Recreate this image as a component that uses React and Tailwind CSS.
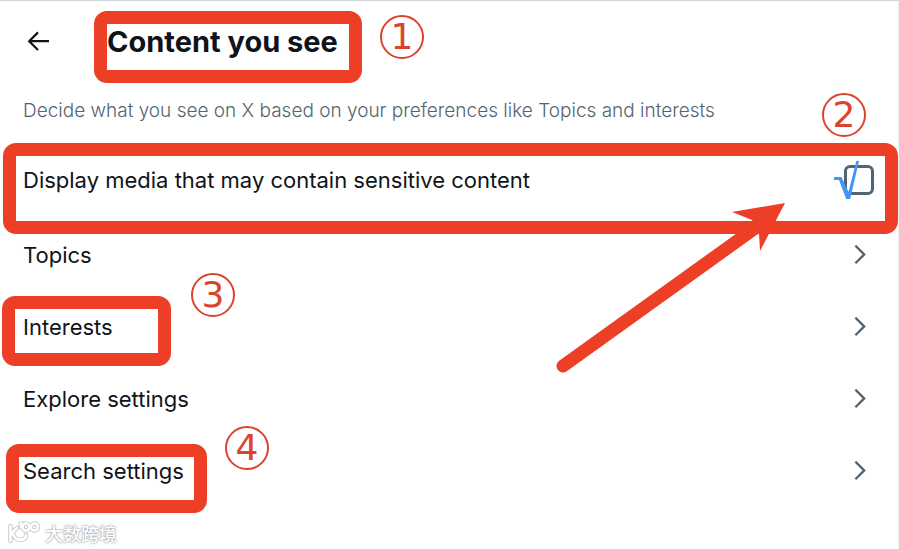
import React from "react";

const links = [
  { label: "Topics" },
  { label: "Interests", step: 3, box: "-left-[21px] -top-[15px] h-[70px] w-[169px]", badge: "left-[168px] -top-[38px]" },
  { label: "Explore settings" },
  { label: "Search settings", step: 4, box: "-left-[17px] -top-[11px] h-[69px] w-[201px]", badge: "left-[202px] -top-[29px]" },
];

function Highlight({ className }) {
  return (
    <span
      aria-hidden="true"
      className={`pointer-events-none absolute rounded-[13px] border-[13px] border-[#ec3f26] ${className}`}
    />
  );
}

function Step({ n, className }) {
  return (
    <span
      className={`pointer-events-none absolute flex h-11 w-11 items-center justify-center rounded-full border-2 border-[#dc432e] font-['DejaVu_Sans',sans-serif] text-4xl leading-none text-[#dc432e] ${className}`}
    >
      {n}
    </span>
  );
}

function Chevron() {
  return (
    <svg viewBox="0 0 12 20" className="h-5 w-3" fill="none" stroke="#536471" strokeWidth="2.3" aria-hidden="true">
      <path d="M1.4 0.6 L10.2 9.4 L1.4 18.2" />
    </svg>
  );
}

export default function App() {
  return (
    <main className="relative min-h-screen overflow-hidden border-t border-r border-t-[#d3d5d7] border-r-[#eff3f4] bg-white font-['Inter',sans-serif] text-[#0f1419]">
      <header className="flex h-[82px] items-center gap-[57px] pl-[26px]">
        <button type="button" aria-label="Back" className="flex h-6 w-6 items-center justify-center">
          <svg viewBox="0 0 24 24" className="h-6 w-6" fill="none" stroke="#0f1419" strokeWidth="2.2" aria-hidden="true">
            <path d="M23 11.2 H3.2 M12 2.4 L3.2 11.2 L12 20" />
          </svg>
        </button>
        <div className="relative">
          <h1 className="text-[29px] font-bold leading-9">Content you see</h1>
          <Highlight className="-left-[13px] -top-[13px] h-[72px] w-[268px]" />
          <Step n={1} className="left-[273px] -top-[9px]" />
        </div>
      </header>

      <p className="px-[23px] pb-4 pt-4 text-[19px] font-light leading-6 text-[#536471]">
        Decide what you see on X based on your preferences like Topics and interests
      </p>

      <div className="relative flex items-start justify-between pb-[22px] pl-[23px] pr-6 pt-[26px]">
        <label htmlFor="sensitive" className="text-[22px] leading-[30px]">
          Display media that may contain sensitive content
        </label>
        <span className="relative flex h-8">
          <input
            id="sensitive"
            type="checkbox"
            className="h-[30px] w-[30px] appearance-none rounded-md border-3 border-[#536471] bg-white"
          />
          <svg viewBox="0 0 26 38" className="pointer-events-none absolute -left-[10px] -top-1 h-[38px] w-[26px]" aria-hidden="true">
            <path d="M0 16 H7.5 L14.5 31 L22.3 0 H25 L16.2 38 H12.2 L5 19 H0 Z" fill="#4397f3" />
          </svg>
        </span>
        <Highlight className="inset-x-0 left-[3px] top-[4px] h-[91px]" />
        <Step n={2} className="right-8 -top-[46px]" />
        <svg viewBox="0 0 240 180" className="pointer-events-none absolute right-[106px] top-[60px] h-[180px] w-[240px]" aria-hidden="true">
          <path d="M11 167 L206 27" stroke="#ec3f26" strokeWidth="13" strokeLinecap="round" />
          <path d="M233 4 L180 13 L200 21 L207 35 L208 52 Z" fill="#ec3f26" />
        </svg>
      </div>

      <nav aria-label="Content settings">
        {links.map((item) => (
          <a key={item.label} href="#" className="flex h-[72px] items-center justify-between pl-[23px] pr-6">
            <span className="relative text-[22px] leading-8">
              {item.label}
              {item.step && <Highlight className={item.box} />}
              {item.step && <Step n={item.step} className={item.badge} />}
            </span>
            <span className="pr-2">
              <Chevron />
            </span>
          </a>
        ))}
      </nav>

      <div className="absolute bottom-1 left-2 flex items-center gap-1 font-['Noto_Sans_CJK_SC',sans-serif] text-lg font-medium leading-6 text-white [text-shadow:0_0_2px_#999,0_0_2px_#aaa]">
        <svg viewBox="0 0 33 24" className="h-6 w-[33px]" fill="none" aria-hidden="true">
          <g stroke="#c8c8c8" strokeWidth="4.5" strokeLinecap="round" strokeLinejoin="round">
            <path d="M2.5 5 V20 M3 13 L9 7 M5 13 Q8 21 16 18 Q18 17 18 14" />
            <path d="M13 1.5 V6" />
            <circle cx="18" cy="6" r="3.5" />
            <circle cx="26.5" cy="6" r="3.5" />
          </g>
          <g stroke="#fff" strokeWidth="2.6" strokeLinecap="round" strokeLinejoin="round">
            <path d="M2.5 5 V20 M3 13 L9 7 M5 13 Q8 21 16 18 Q18 17 18 14" />
            <path d="M13 1.5 V6" />
            <circle cx="18" cy="6" r="3.5" />
            <circle cx="26.5" cy="6" r="3.5" />
          </g>
        </svg>
        <span>大数跨境</span>
      </div>
    </main>
  );
}
